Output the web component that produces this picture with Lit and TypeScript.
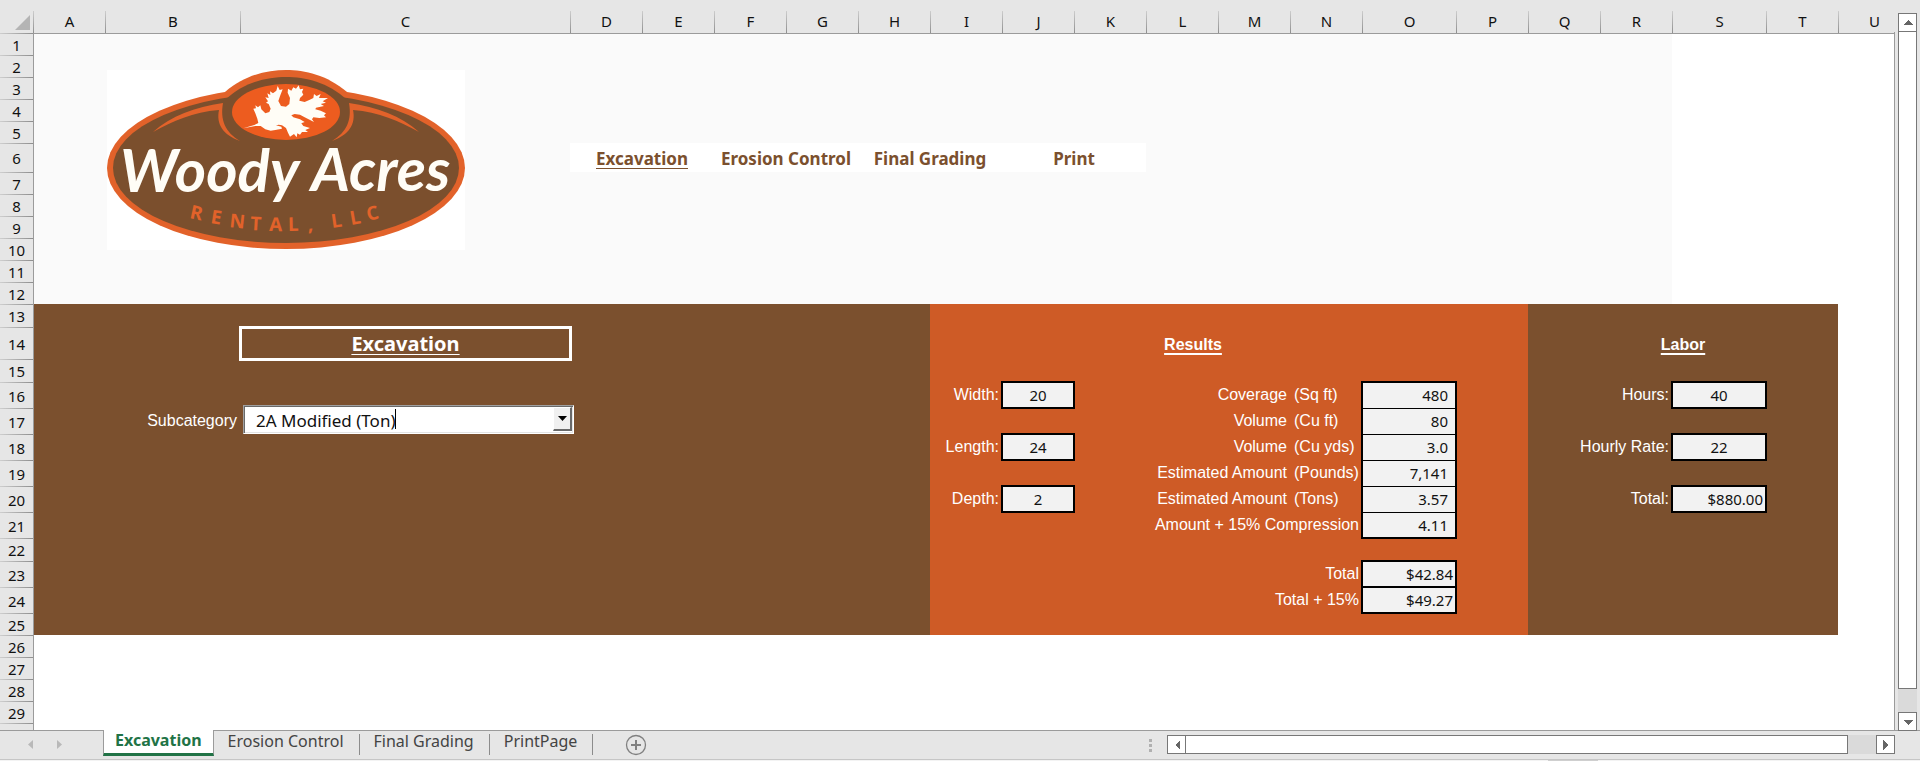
import { LitElement, html, css, svg, nothing } from "lit";
import { customElement, state } from "lit/decorators.js";

const COLUMNS = "ABCDEFGHIJKLMNOPQRSTU".split("");
const ROWS = Array.from({ length: 30 }, (_, i) => i + 1);

/** Turns "B2" or "B2:C4" into a grid-area; the first track of each axis holds the headings. */
function area(ref: string): string {
  const [from, to = from] = ref.split(":");
  const parse = (r: string) => ({
    col: COLUMNS.indexOf(r[0]) + 2,
    row: Number(r.slice(1)) + 1,
  });
  const a = parse(from);
  const b = parse(to);
  return `grid-area: ${a.row} / ${a.col} / ${b.row + 1} / ${b.col + 1}`;
}

const NAV = [
  { ref: "D6:E6", text: "Excavation", current: true },
  { ref: "F6:G6", text: "Erosion Control" },
  { ref: "H6:I6", text: "Final Grading" },
  { ref: "J6:K6", text: "Print" },
];

const ENTRIES = [
  { id: "width", label: "Width:", value: "20", at: "I16", box: "J16" },
  { id: "length", label: "Length:", value: "24", at: "I18", box: "J18" },
  { id: "depth", label: "Depth:", value: "2", at: "I20", box: "J20" },
  { id: "hours", label: "Hours:", value: "40", at: "Q16:R16", box: "S16" },
  { id: "rate", label: "Hourly Rate:", value: "22", at: "Q18:R18", box: "S18" },
];

const RESULTS = [
  { row: 16, label: "Coverage", unit: "(Sq ft)", value: "480" },
  { row: 17, label: "Volume", unit: "(Cu ft)", value: "80" },
  { row: 18, label: "Volume", unit: "(Cu yds)", value: "3.0" },
  { row: 19, label: "Estimated Amount", unit: "(Pounds)", value: "7,141" },
  { row: 20, label: "Estimated Amount", unit: "(Tons)", value: "3.57" },
  { row: 21, label: "Amount + 15% Compression", unit: "", value: "4.11" },
];

const TOTALS = [
  { row: 23, label: "Total", value: "$42.84" },
  { row: 24, label: "Total + 15%", value: "$49.27" },
];

const SHEETS = ["Excavation", "Erosion Control", "Final Grading", "PrintPage"];

@customElement("woody-logo")
export class WoodyLogo extends LitElement {
  static styles = css`
    :host { display: block; }
    svg { display: block; width: 100%; height: auto; background: #fff; }
    .orange { fill: #e2622a; }
    .brown { fill: #7b4f2d; }
    .bright { fill: #ed5c1f; }
    .leaf, .script { fill: #fffdf6; }
    .script { font: italic 700 60px Lato, sans-serif; }
    .sub { fill: #e2622a; font: 700 19px "Open Sans", sans-serif; }
  `;

  render() {
    const flourish = svg`<path class="orange" d="M46 62C64 46 88 37 116 33C113 50 118 62 133 71C116 65 109 54 112 40C86 42 66 51 46 62Z"/>`;
    return html`
      <svg viewBox="0 0 358 180" role="img" aria-label="Woody Acres Rental, LLC">
        <ellipse class="orange" cx="179" cy="98" rx="179" ry="81" />
        <path class="orange" d="M118 22C138 5 160 0 179 0S220 5 240 22L240 60H118Z" />
        <ellipse class="brown" cx="179" cy="98" rx="173" ry="75" />
        <path class="brown" d="M118 30C137 12 160 7 179 7S221 12 240 30L240 80H118Z" />
        ${flourish}
        <g transform="translate(358 0) scale(-1 1)">${flourish}</g>
        <ellipse class="bright" cx="179" cy="42" rx="54" ry="28" />
        <g transform="translate(119 6) scale(.3333)">
          <path class="leaf" d="M52 157L85 147L97 141L94 128L88 112L82 98L90 97L88 88L96 94L103 88L106 100L118 112L130 108L134 98L128 84L120 80L126 76L118 64L128 66L124 52L133 57L132 46L141 52L151 44L155 30L161 42L170 40L163 58L157 75L165 90L180 92L190 84L192 66L185 50L186 38L196 44L202 34L210 38L218 28L222 40L232 38L228 48L232 56L222 66L220 74L236 78L250 72L262 66L264 54L272 60L284 54L279 66L306 66L290 76L300 80L284 84L294 90L270 95L268 100L284 104L300 112L294 118L300 124L280 126L262 124L258 130L264 138L236 124L222 116L206 114L196 118L202 124L222 130L236 138L226 142L232 150L252 156L238 162L246 168L228 168L222 176L214 172L212 184L204 174L192 182L186 170L180 156L168 148L158 146L150 148L166 152L168 158L148 162L134 164L118 160L104 150L88 150Z" />
        </g>
        <text class="script" x="13" y="122">Woody</text>
        <text class="script" x="204" y="121">Acres</text>
        <text class="sub" x="82 103 122 143 162 181 201 216 225 244 261"
          y="148 153 157 160 161 161 161 161 158 155 151"
          rotate="12 9 6 3 1 -1 -3 -5 -8 -10 -13">RENTAL, LLC</text>
      </svg>
    `;
  }
}

@customElement("app-root")
export class AppRoot extends LitElement {
  static styles = css`
    * { box-sizing: border-box; }
    :host {
      --line: #9b9b9b;
      --chrome: #e6e6e6;
      --brown: #7b502e;
      --orange: #ce5b26;
      --ui: "Noto Sans", "Segoe UI", sans-serif;
      --arial: "Liberation Sans", Arial, sans-serif;
      display: flex;
      flex-direction: column;
      height: 100vh;
      overflow: hidden;
      background: var(--chrome);
      font-family: var(--ui);
      font-size: 15px;
      color: #111;
    }
    a { color: inherit; text-decoration: none; }
    h2 { margin: 0; }
    button { margin: 0; padding: 0; border: 0; background: none; font: inherit; color: inherit; }

    .window { flex: 1; min-height: 0; display: flex; }
    .viewport { flex: 1; min-width: 0; overflow: hidden; }
    .sheet {
      display: grid;
      height: 100%;
      grid-template-columns:
        33px 72px 135px 330px repeat(11, 72px) 94px repeat(3, 72px) 94px 72px minmax(72px, 1fr);
      grid-template-rows:
        33px repeat(5, 22px) 29px repeat(6, 22px) 23px 32px 23px repeat(6, 26px)
        23px repeat(2, 26px) repeat(5, 22px) minmax(0, 1fr);
    }

    .corner, .col-head { grid-row: 1; margin-top: 11px; }
    .corner {
      grid-column: 1;
      display: flex;
      justify-content: flex-end;
      align-items: flex-end;
      padding: 0 3px 3px 0;
    }
    .col-head {
      display: flex;
      align-items: center;
      justify-content: center;
      padding-bottom: 2px;
      border-left: 1px solid;
      border-image: linear-gradient(#d0d0d0, #8c8c8c) 1;
    }
    .row-head {
      grid-column: 1;
      display: flex;
      align-items: center;
      justify-content: center;
      overflow: hidden;
      border-top: 1px solid;
      border-image: linear-gradient(90deg, #d0d0d0, #8c8c8c) 1;
    }
    .canvas { grid-area: 2 / 2 / -1 / -1; background: #fff; }
    .frame {
      grid-area: 2 / 2 / -1 / -1;
      border: solid var(--line);
      border-width: 1px 0 0 1px;
      pointer-events: none;
    }
    .pale { background: #fafafa; }
    .white { background: #fff; }
    .brown { background: var(--brown); }
    .orange { background: var(--orange); }

    .logo { width: 358px; margin: 15px 0 0 2px; }
    .nav {
      display: flex;
      align-items: center;
      justify-content: center;
      padding-top: 2px;
      color: var(--brown);
      font-size: 17px;
      font-weight: 700;
      white-space: nowrap;
    }
    .nav.current, .title, .heading { text-decoration: underline; text-underline-offset: 3px; }
    .title {
      display: flex;
      align-items: center;
      justify-content: center;
      margin: -1px -2px -2px -1px;
      border: 3px solid #fff;
      color: #fff;
      font-size: 20px;
      line-height: 24px;
      text-decoration-thickness: 1px;
    }
    .heading {
      align-self: center;
      padding-top: 4px;
      text-align: center;
      color: #fff;
      font: 700 16px var(--arial);
      text-decoration-thickness: 2px;
    }
    .label {
      display: flex;
      align-items: center;
      justify-content: flex-end;
      padding-right: 3px;
      color: #fff;
      font: 16px var(--arial);
      white-space: nowrap;
    }
    .label.unit { justify-content: flex-start; padding: 0 0 0 4px; }
    .box {
      display: flex;
      margin: -1px;
      border: 2px solid #000;
      background: #f2f2f2;
    }
    .box input {
      width: 100%;
      min-width: 0;
      margin: 0;
      padding: 0;
      border: 0;
      background: none;
      text-align: center;
      font: 15px var(--ui);
      color: #111;
    }
    .value {
      display: flex;
      align-items: center;
      justify-content: flex-end;
      padding: 0 8px 2px 0;
      background: #f2f2f2;
      border-top: 1px solid #000;
    }
    .value.money { padding-right: 3px; }
    .ring { margin: -1px; border: 2px solid #000; }
    .divide { border-bottom: 2px solid #000; margin-bottom: -1px; }

    .combo {
      position: relative;
      width: 331px;
      height: 29px;
      margin: 23px 0 0 3px;
      background: #fff;
      border: 1px solid;
      border-color: #a0a0a0 #fff #fff #a0a0a0;
      box-shadow: inset 1px 1px #696969, inset -1px -1px #e3e3e3;
    }
    .combo select {
      appearance: none;
      width: 100%;
      height: 100%;
      margin: 0;
      padding: 2px 24px 0 12px;
      border: 0;
      background: none;
      font: 17px var(--ui);
      color: #111;
      outline: none;
    }
    .caret { position: absolute; left: 151px; top: 3px; width: 1px; height: 20px; background: #000; pointer-events: none; }
    .drop {
      position: absolute;
      top: 1px;
      right: 1px;
      bottom: 2px;
      width: 19px;
      display: grid;
      place-items: center;
      background: #f0f0f0;
      border: solid;
      border-width: 1px 2px 2px 1px;
      border-color: #fff #696969 #696969 #fff;
      pointer-events: none;
    }

    .vscroll {
      width: 26px;
      margin-bottom: -1px;
      padding: 13px 3px 0;
      display: flex;
      flex-direction: column;
      border-left: 1px solid var(--line);
      border-image: linear-gradient(transparent 33px, #9b9b9b 33px) 1;
      z-index: 1;
    }
    .arrow {
      flex: none;
      width: 19px;
      height: 19px;
      display: grid;
      place-items: center;
      background: #fff;
      border: 1px solid #777;
    }
    .track { flex: 1; display: flex; background: #dadada; }
    .thumb { flex: 1; background: #fff; border: 1px solid #777; }
    .vscroll .track { flex-direction: column; margin-top: -1px; padding-bottom: 23px; }
    .hscroll .track { margin-left: -1px; padding-right: 28px; }

    .bar {
      display: flex;
      height: 29px;
      padding-right: 25px;
      border-top: 1px solid var(--line);
    }
    .steps { display: flex; gap: 24px; width: 103px; padding: 9px 0 0 28px; align-items: flex-start; }
    .steps button, .steps svg { display: block; }
    .tabs { display: flex; }
    .tab {
      display: flex;
      align-items: center;
      height: 25px;
      padding: 0 16px 6px 14px;
      font-size: 16px;
      color: #444;
      background: linear-gradient(#8c8c8c, #8c8c8c) right 3px / 1px 21px no-repeat;
      white-space: nowrap;
    }
    .tab.active {
      height: 26px;
      margin-top: -1px;
      padding: 0 11px 3px;
      border: solid var(--line);
      border-width: 0 1px;
      border-bottom: 3px solid #217346;
      background: #fff;
      color: #217346;
      font-weight: 700;
    }
    .add { display: block; align-self: flex-start; margin: 3px 0 0 32px; }
    .add svg { display: block; }
    .grip { display: grid; gap: 2px; align-content: start; margin: 8px 15px 0 auto; }
    .grip i { width: 3px; height: 3px; background: #b0b0b0; }
    .hscroll { display: flex; width: 728px; height: 19px; margin-top: 4px; }
    .status { flex: none; display: flex; justify-content: flex-end; height: 2px; padding-right: 322px; border-top: 1px solid #c6c6c6; background: #f3f3f3; }
    .status i { width: 50px; background: #cfcfcf; }
  `;

  @state() private active = "Excavation";

  private triangle(points: string) {
    return html`<svg width="10" height="10" viewBox="0 0 10 10" aria-hidden="true" shape-rendering="crispEdges"><polygon points=${points} fill="#666" /></svg>`;
  }

  private renderHeadings() {
    return html`
      <div class="corner">
        <svg width="15" height="15" viewBox="0 0 15 15" aria-hidden="true"><path d="M15 0V15H0Z" fill="#b4b4b4" /></svg>
      </div>
      ${COLUMNS.map((c, i) => html`<div class="col-head" style=${`grid-column: ${i + 2}`}>${c}</div>`)}
      ${ROWS.map((r) => html`<div class="row-head" style=${`grid-row: ${r + 1}`}>${r < 30 ? r : nothing}</div>`)}
    `;
  }

  private renderFills() {
    return html`
      <div class="canvas"></div>
      <div class="pale" style=${area("A1:R12")}></div>
      <div class="white" style=${area("D6:K6")}></div>
      <div class="brown" style=${area("A13:T25")}></div>
      <div class="orange" style=${area("I13:P25")}></div>
      <div class="frame"></div>
    `;
  }

  private renderResults() {
    return html`
      <h2 class="heading" style=${area("I14:O14")}>Results</h2>
      ${RESULTS.map((r) => html`
        <label class="label" for=${`r${r.row}`} style=${area(r.unit ? `K${r.row}:M${r.row}` : `K${r.row}:N${r.row}`)}>${r.label}</label>
        ${r.unit ? html`<span class="label unit" style=${area(`N${r.row}`)}>${r.unit}</span>` : nothing}
        <output class="value" id=${`r${r.row}`} style=${area(`O${r.row}`)}>${r.value}</output>
      `)}
      <div class="ring" style=${area("O16:O21")}></div>
      ${TOTALS.map((t) => html`
        <label class="label" for=${`t${t.row}`} style=${area(`L${t.row}:N${t.row}`)}>${t.label}</label>
        <output class="value money" id=${`t${t.row}`} style=${area(`O${t.row}`)}>${t.value}</output>
      `)}
      <div class="ring" style=${area("O23:O24")}></div>
      <div class="divide" style=${area("O23")}></div>
    `;
  }

  render() {
    return html`
      <main class="window">
        <div class="viewport">
          <div class="sheet">
            ${this.renderHeadings()} ${this.renderFills()}
            <woody-logo class="logo" style=${area("B2:C12")}></woody-logo>
            ${NAV.map((n) => html`<a href="#" class=${n.current ? "nav current" : "nav"} style=${area(n.ref)}>${n.text}</a>`)}

            <h2 class="title" style=${area("C14")}>Excavation</h2>
            <label class="label" for="subcategory" style=${area("B17")}>Subcategory</label>
            <div class="combo" style=${area("C16:C18")}>
              <select id="subcategory"><option>2A Modified (Ton)</option></select>
              <span class="caret"></span>
              <span class="drop"><svg width="9" height="5" viewBox="0 0 9 5" aria-hidden="true"><path d="M0 0H9L4.5 5Z" /></svg></span>
            </div>

            ${ENTRIES.map((e) => html`
              <label class="label" for=${e.id} style=${area(e.at)}>${e.label}</label>
              <div class="box" style=${area(e.box)}><input id=${e.id} .value=${e.value} /></div>
            `)}
            ${this.renderResults()}

            <h2 class="heading" style=${area("Q14:T14")}>Labor</h2>
            <label class="label" for="labor-total" style=${area("Q20:R20")}>Total:</label>
            <output class="value money" id="labor-total" style=${area("S20")}>$880.00</output>
            <div class="ring" style=${area("S20")}></div>
          </div>
        </div>
        <div class="vscroll">
          <button class="arrow" aria-label="Scroll up">${this.triangle("5,2 10,7 0,7")}</button>
          <div class="track"><div class="thumb"></div></div>
          <button class="arrow" aria-label="Scroll down">${this.triangle("0,3 10,3 5,8")}</button>
        </div>
      </main>

      <footer class="bar">
        <div class="steps">
          <button aria-label="Previous sheet"><svg width="5" height="9" viewBox="0 0 5 9"><path d="M5 0V9L0 4.500Z" fill="#b9b9b9" /></svg></button>
          <button aria-label="Next sheet"><svg width="5" height="9" viewBox="0 0 5 9"><path d="M0 0V9L5 4.500Z" fill="#b9b9b9" /></svg></button>
        </div>
        <nav class="tabs">
          ${SHEETS.map((s) => html`<button class=${s === this.active ? "tab active" : "tab"} @click=${() => (this.active = s)}>${s}</button>`)}
        </nav>
        <button class="add" aria-label="New sheet">
          <svg width="22" height="22" viewBox="0 0 22 22" fill="none" stroke="#808080"><circle cx="11" cy="11" r="9.500" stroke-width="1.300" /><path d="M11 6V16M6 11H16" stroke-width="2" /></svg>
        </button>
        <div class="grip"><i></i><i></i><i></i></div>
        <div class="hscroll">
          <button class="arrow" aria-label="Scroll left">${this.triangle("3,5 8,0 8,10")}</button>
          <div class="track"><div class="thumb"></div></div>
          <button class="arrow" aria-label="Scroll right">${this.triangle("2,0 7,5 2,10")}</button>
        </div>
      </footer>
      <div class="status"><i></i></div>
    `;
  }
}
